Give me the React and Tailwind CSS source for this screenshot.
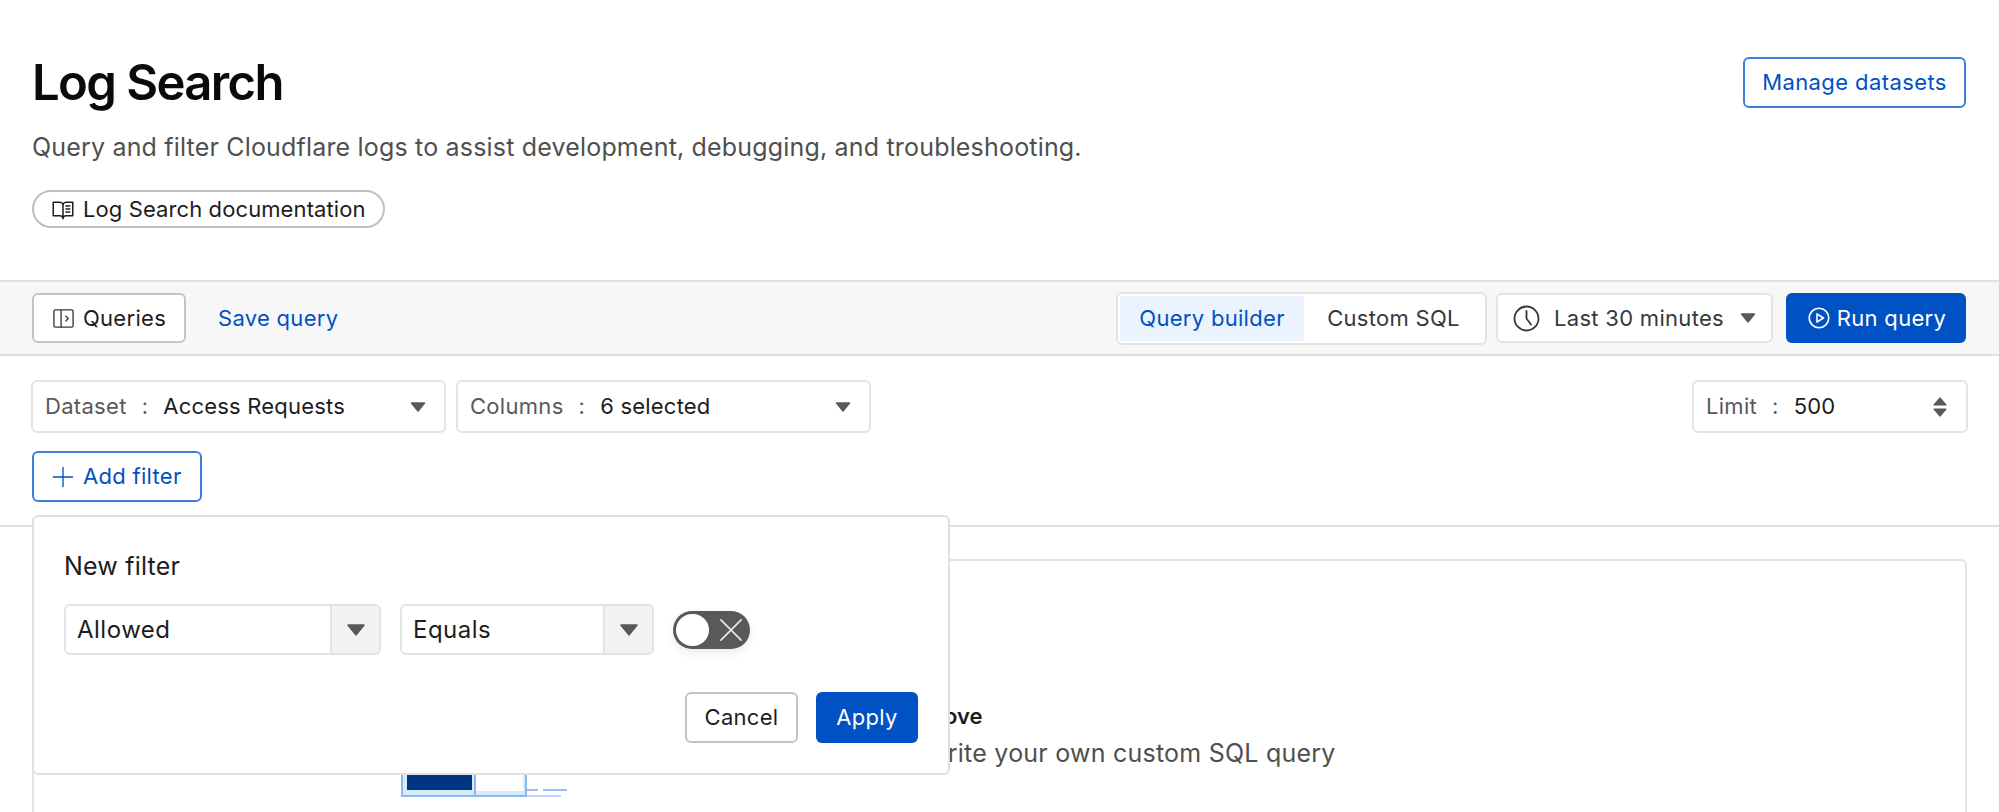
import React from "react";
import { PiBookOpenText, PiPlayCircle, PiPlusLight, PiXLight } from "react-icons/pi";

function Caret({ className = "w-[16px] h-[10px]" }) {
  return (
    <svg viewBox="0 0 16 10" className={"shrink-0 " + className}>
      <path d="M1.5 1h13L8 9z" fill="#595959" stroke="#595959" strokeWidth="1.5" strokeLinejoin="round" />
    </svg>
  );
}

function Updown() {
  return (
    <svg viewBox="0 0 16 22" className="w-[16px] h-[22px] shrink-0">
      <path d="M2 9h12L8 2z" fill="#595959" stroke="#595959" strokeWidth="1.2" strokeLinejoin="round" />
      <path d="M2 13h12L8 20z" fill="#595959" stroke="#595959" strokeWidth="1.2" strokeLinejoin="round" />
    </svg>
  );
}

function PanelIcon() {
  return (
    <svg viewBox="0 0 24 24" className="w-[23px] h-[23px] shrink-0" fill="none" stroke="#36393a" strokeWidth="1.4">
      <rect x="2" y="3" width="20" height="18" rx="1.5" />
      <path d="M9.5 3v18" />
      <path d="M14 9l3 3-3 3" />
    </svg>
  );
}

function ClockIcon() {
  return (
    <svg viewBox="0 0 27 27" className="w-[27px] h-[27px] shrink-0" fill="none" stroke="#36393a" strokeWidth="1.8" strokeLinecap="round" strokeLinejoin="round">
      <circle cx="13.5" cy="13.5" r="12" />
      <path d="M13.5 6v7.5l4.5 6" />
    </svg>
  );
}

function LabelSelect({ label, value, width, icon }) {
  return (
    <div className={"flex items-center h-[53px] pl-[12px] pr-[18px] bg-white border-2 border-[#e3e3e3] rounded-[6px] text-[22px] tracking-[0.3px] " + width}>
      <span className="text-[#595959]">{label}</span>
      <span className="text-[#595959] ml-[15px] mr-[15px]">:</span>
      <span className="text-[#1d1d1d] flex-1 tracking-[0.2px]">{value}</span>
      {icon}
    </div>
  );
}

function FormSelect({ value, width }) {
  return (
    <div className={"flex h-[51px] bg-white border-2 border-[#e3e3e3] rounded-[6px] overflow-hidden text-[24px] tracking-[0.5px] text-[#1d1d1d] " + width}>
      <span className="flex-1 flex items-center pl-[11px]">{value}</span>
      <span className="w-[49px] flex items-center justify-center bg-[#f2f2f2] border-l-2 border-[#e3e3e3]">
        <Caret className="w-[20px] h-[12px]" />
      </span>
    </div>
  );
}

export default function App() {
  return (
    <div className="relative h-[812px] overflow-hidden bg-white font-['Inter',sans-serif] text-[#1d1d1d]">
      <header className="h-[280px] pl-[32px] pr-[33px] flex justify-between">
        <div>
          <h1 className="mt-[53px] text-[49px] leading-[60px] font-semibold tracking-[-1.6px] text-[#0a0a0a]">Log Search</h1>
          <p className="mt-[16px] text-[25px] leading-[36px] tracking-[0.18px] text-[#4f4f4f]">
            Query and filter Cloudflare logs to assist development, debugging, and troubleshooting.
          </p>
          <a className="mt-[25px] w-[353px] h-[38px] flex items-center gap-[8px] pl-[17px] border-2 border-[#bfbfbf] rounded-full text-[22px] tracking-[0.1px] text-[#1d1d1d]">
            <PiBookOpenText className="w-[24px] h-[24px]" />
            Log Search documentation
          </a>
        </div>
        <button className="mt-[57px] w-[223px] h-[51px] border-2 border-[#3f7fdc] rounded-[6px] bg-white text-[22px] tracking-[0.4px] text-[#0051c3]">
          Manage datasets
        </button>
      </header>

      <div className="h-[76px] pl-[32px] pr-[33px] flex items-center justify-between bg-[#f7f7f7] border-y-2 border-[#e0e0e0] text-[22px] tracking-[0.3px]">
        <div className="flex items-center">
          <button className="w-[154px] h-[50px] flex items-center justify-center gap-[8px] bg-white border-2 border-[#c4c4c4] rounded-[6px]">
            <PanelIcon />
            Queries
          </button>
          <a className="ml-[32px] text-[#0051c3]">Save query</a>
        </div>
        <div className="flex items-center">
          <div className="w-[371px] h-[53px] flex items-center p-[2px] bg-white border-2 border-[#e3e3e3] rounded-[6px]">
            <span className="w-[184px] h-[45px] flex items-center justify-center bg-[#ebf3fe] rounded-[3px] text-[#0051c3]">Query builder</span>
            <span className="flex-1 text-center text-[#36393a]">Custom SQL</span>
          </div>
          <div className="ml-[9px] w-[277px] h-[50px] flex items-center pl-[15px] pr-[15px] bg-white border-2 border-[#e3e3e3] rounded-[6px] text-[#36393a]">
            <span className="mr-[14px]"><ClockIcon /></span>
            <span className="flex-1">Last 30 minutes</span>
            <Caret />
          </div>
          <button className="ml-[13px] w-[180px] h-[50px] flex items-center justify-center gap-[5px] bg-[#0051c3] rounded-[6px] text-white">
            <PiPlayCircle className="w-[26px] h-[26px]" />
            Run query
          </button>
        </div>
      </div>

      <div className="h-[171px] pl-[31px] pr-[31px] pt-[24px] border-b-2 border-[#e0e0e0]">
        <div className="flex justify-between">
          <div className="flex gap-[10px]">
            <LabelSelect label="Dataset" value="Access Requests" width="w-[415px]" icon={<Caret />} />
            <LabelSelect label="Columns" value="6 selected" width="w-[415px]" icon={<Caret />} />
          </div>
          <LabelSelect label="Limit" value="500" width="w-[276px]" icon={<Updown />} />
        </div>
        <button className="mt-[18px] ml-[1px] w-[170px] h-[51px] flex items-center gap-[6px] pl-[15px] border-2 border-[#3f7fdc] rounded-[6px] text-[22px] tracking-[0.3px] text-[#0051c3]">
          <PiPlusLight className="w-[28px] h-[28px]" />
          Add filter
        </button>
      </div>

      <main className="pl-[32px] pr-[32px] pt-[32px]">
        <div className="h-[400px] border-2 border-[#e3e3e3] rounded-[6px] flex pl-[367px] pt-[100px]">
          <div className="relative w-[221px] shrink-0 h-[136px]">
            <div className="h-full w-[126px] bg-[#d3ecf8] border-2 border-[#8db8f4] flex">
              <div className="w-[73px] border-r-2 border-[#8db8f4] pl-[4px] pr-[2px] pb-[5px]"><div className="h-full bg-[#00357f]" /></div>
              <div className="flex-1 pr-[2px] pb-[4px]"><div className="h-full bg-white" /></div>
            </div>
            <span className="absolute left-[126px] bottom-[6px] w-[11px] h-[2px] bg-[#9cbdf3]" />
            <span className="absolute left-[142px] bottom-[6px] w-[24px] h-[2px] bg-[#9cbdf3]" />
            <span className="absolute left-[126px] bottom-0 w-[34px] h-[2px] bg-[#c3d6f7]" />
          </div>
          <div className="pt-[37px] leading-[37px]">
            <p className="text-[22px] font-semibold text-[#1d1d1d]">Run a query from the filters above</p>
            <p className="text-[25px] tracking-[0.23px] text-[#4f4f4f]">Use the query builder, or write your own custom SQL query</p>
          </div>
        </div>
      </main>

      <div className="absolute left-[32px] top-[515px] w-[918px] h-[260px] bg-white border-2 border-[#e0e0e0] rounded-[6px] pt-[33px] pl-[30px] pr-[30px]">
        <p className="text-[25px] leading-[32px] tracking-[0.2px] text-[#1d1d1d]">New filter</p>
        <div className="mt-[22px] flex items-center gap-[19px]">
          <FormSelect value="Allowed" width="w-[317px]" />
          <FormSelect value="Equals" width="w-[254px]" />
          <span className="w-[77px] h-[38px] flex items-center justify-between pl-[3px] pr-[1px] bg-[#595959] rounded-full shadow-[0_4px_10px_rgba(0,0,0,0.08)]">
            <span className="w-[33px] h-[32px] bg-white rounded-full" />
            <PiXLight className="w-[36px] h-[36px] text-[#e8e8e8]" />
          </span>
        </div>
        <div className="mt-[37px] flex justify-end gap-[18px] text-[22px] tracking-[0.3px]">
          <button className="w-[113px] h-[51px] bg-white border-2 border-[#c4c4c4] rounded-[6px]">Cancel</button>
          <button className="w-[102px] h-[51px] bg-[#0051c3] rounded-[6px] text-white">Apply</button>
        </div>
      </div>
    </div>
  );
}
